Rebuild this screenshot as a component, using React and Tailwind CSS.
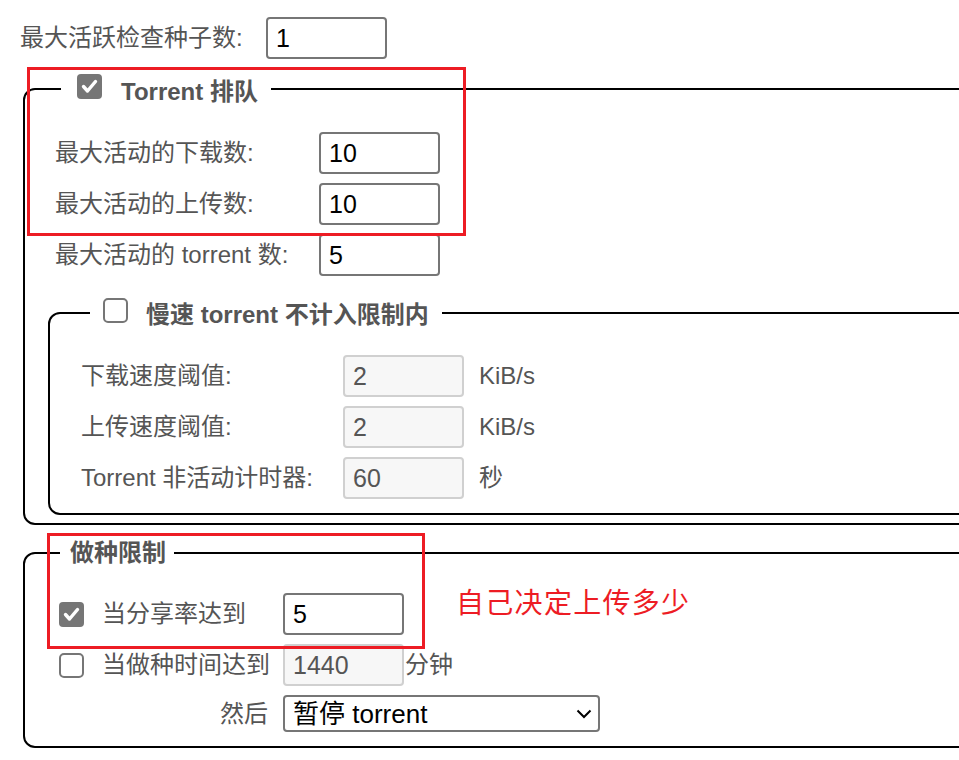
import React from 'react'

const font = "font-['Liberation_Sans','Noto_Sans_CJK_SC',sans-serif]"

function Check({ on }) {
  if (on) {
    return (
      <span className="flex h-[25px] w-[25px] shrink-0 items-center justify-center rounded-[4px] bg-[#767676]">
        <svg width="25" height="25" viewBox="0 0 25 25">
          <path d="M6.5 12.5 L10.5 17 L18.5 7.5" fill="none" stroke="#fff" strokeWidth="3.4" strokeLinecap="round" strokeLinejoin="round" />
        </svg>
      </span>
    )
  }
  return <span className="block h-[25px] w-[25px] shrink-0 rounded-[5px] border-2 border-[#767676] bg-white" />
}

function Field({ value, disabled, w = 'w-[121px]', h = 'h-[42px]' }) {
  const look = disabled
    ? 'border-[#d0d0d0] bg-[#f7f7f7] text-[#555]'
    : 'border-[#767676] bg-white text-black'
  return (
    <div className={`flex ${w} ${h} shrink-0 items-center rounded-[4px] border-2 pl-[8px] text-[25px] ${look}`}>{value}</div>
  )
}

function Row({ label, value, labelW, unit, disabled, h }) {
  return (
    <div className="flex h-[42px] items-center">
      <span className={`${labelW} shrink-0`}>{label}</span>
      <Field value={value} disabled={disabled} h={h} />
      {unit && <span className="ml-[15px]">{unit}</span>}
    </div>
  )
}

export default function App() {
  return (
    <div className={`relative h-[760px] w-[959px] overflow-hidden bg-white text-[24px] leading-none text-[#555] ${font}`}>
      <div className="ml-[20px] mt-[17px] flex h-[42px] items-center">
        <span className="w-[246px] shrink-0">最大活跃检查种子数:</span>
        <Field value="1" />
      </div>

      {/* Torrent 排队 */}
      <fieldset className="m-0 ml-[23px] mt-[15px] w-[1100px] rounded-[12px] border-2 border-black p-0 pb-[8px]">
        <legend className="ml-[36px] p-0 pl-[16px] pr-[13px]">
          <div className="flex h-[30px] items-center font-bold">
            <span className="mb-[6px]"><Check on /></span>
            <span className="ml-[19px] mt-[6px]">Torrent 排队</span>
          </div>
        </legend>
        <div className="flex flex-col gap-[9px] pl-[30px] pt-[28px]">
          <Row label="最大活动的下载数:" value="10" labelW="w-[264px]" />
          <Row label="最大活动的上传数:" value="10" labelW="w-[264px]" />
          <Row label="最大活动的 torrent 数:" value="5" labelW="w-[264px]" />
        </div>

        <fieldset className="m-0 ml-[23px] mt-[22px] w-[1100px] rounded-[12px] border-2 border-black p-0 pb-[14px]">
          <legend className="ml-[40px] p-0 pl-[13px] pr-[13px]">
            <div className="flex h-[30px] items-center font-bold">
              <span className="mb-[6px]"><Check /></span>
              <span className="ml-[18px] mt-[4px]">慢速 torrent 不计入限制内</span>
            </div>
          </legend>
          <div className="flex flex-col gap-[9px] pl-[31px] pt-[27px]">
            <Row label="下载速度阈值:" value="2" labelW="w-[262px]" unit="KiB/s" disabled />
            <Row label="上传速度阈值:" value="2" labelW="w-[262px]" unit="KiB/s" disabled />
            <Row label="Torrent 非活动计时器:" value="60" labelW="w-[262px]" unit="秒" disabled />
          </div>
        </fieldset>
      </fieldset>

      {/* 做种限制 */}
      <fieldset className="m-0 ml-[23px] mt-[13px] w-[1100px] rounded-[12px] border-2 border-black p-0 pb-[14px]">
        <legend className="ml-[35px] p-0 pl-[10px] pr-[8px]">
          <div className="flex h-[30px] items-center font-bold">做种限制</div>
        </legend>
        <div className="flex flex-col gap-[9px] pl-[34px] pt-[25px]">
          <div className="flex h-[42px] items-center">
            <div className="flex w-[224px] shrink-0 items-center">
              <Check on />
              <span className="ml-[18px]">当分享率达到</span>
            </div>
            <Field value="5" />
            <span className="mb-[20px] ml-[52px] text-[28px] tracking-[1.3px] text-[#ed1c24]">自己决定上传多少</span>
          </div>
          <div className="flex h-[42px] items-center">
            <div className="flex w-[224px] shrink-0 items-center">
              <Check />
              <span className="ml-[18px]">当做种时间达到</span>
            </div>
            <Field value="1440" disabled />
            <span className="ml-[1px]">分钟</span>
          </div>
          <div className="flex h-[37px] items-center">
            <span className="w-[224px] shrink-0 pr-[15px] text-right">然后</span>
            <div className="flex h-[37px] w-[317px] items-center justify-between rounded-[4px] border-2 border-[#767676] pl-[8px] pr-[6px] text-[26px] text-black">
              <span>暂停 torrent</span>
              <svg width="16" height="10" viewBox="0 0 16 10">
                <path d="M1.5 1.5 L8 8 L14.5 1.5" fill="none" stroke="#000" strokeWidth="2" />
              </svg>
            </div>
          </div>
        </div>
      </fieldset>

      {/* annotation boxes */}
      <div className="absolute left-[27px] top-[67px] h-[169px] w-[439px] border-[3px] border-[#ed1c24]" />
      <div className="absolute left-[47px] top-[533px] h-[116px] w-[378px] border-[3px] border-[#ed1c24]" />
    </div>
  )
}
